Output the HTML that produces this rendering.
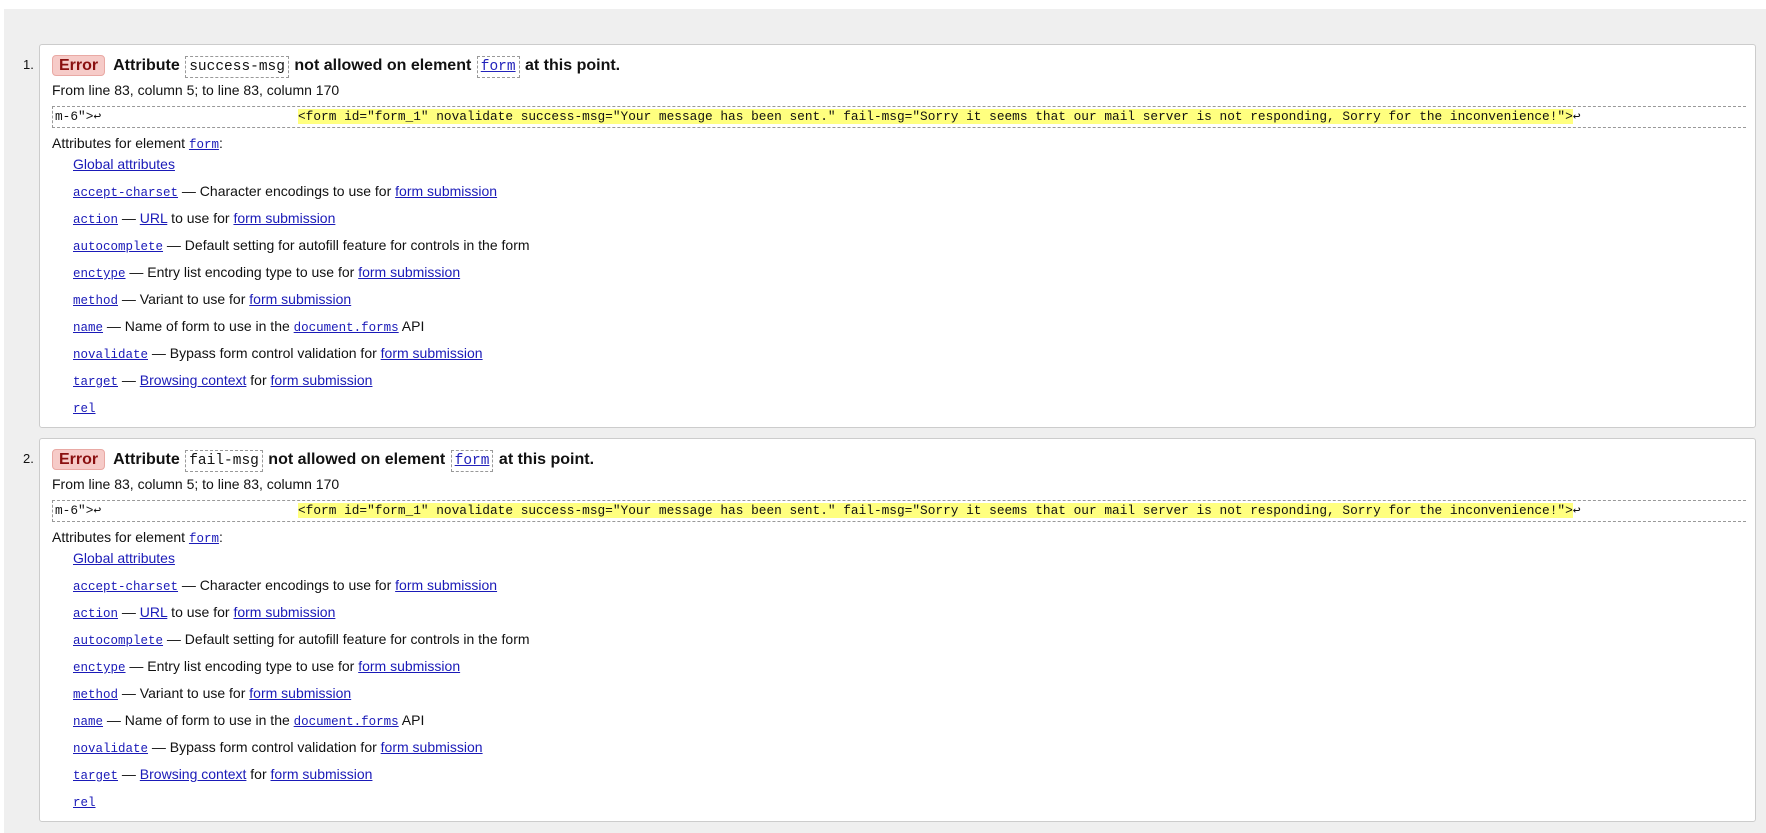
<!DOCTYPE html>
<html><head><meta charset="utf-8"><style>
html,body{margin:0;padding:0;background:#fff;width:1766px;height:833px;overflow:hidden}
.bg{position:absolute;left:4px;top:9px;right:0;bottom:0;background:#efefef}
.card{position:absolute;left:39px;width:1715px;height:382px;background:#fff;border:1px solid #ccc;border-radius:3px;font-family:"Liberation Sans",Arial,sans-serif;font-size:14px;color:#111}
.num{position:absolute;left:-17px;top:12px;font-size:13px}
.h{position:absolute;left:12px;top:10px;font-size:16px;font-weight:bold;white-space:nowrap;line-height:20px}
.badge{display:inline-block;background:#f6cbc8;border:1px solid #e9a9a4;border-radius:4px;padding:0 6px;color:#8a1010;margin-right:8px;line-height:19px}
.hc{font-family:"Liberation Mono",monospace;font-weight:normal;font-size:14.5px;border:1px dashed #999;padding:2px 3px;margin:0 1px}
.hc.l{color:#2222bb;text-decoration:underline}
.from{position:absolute;left:12px;top:36px;line-height:18px}
.code{position:absolute;left:12px;width:1693px;top:61px;height:20px;border-top:1px dashed #999;border-bottom:1px dashed #999;border-left:1px dashed #999;font-family:"Liberation Mono",monospace;font-size:12.8px;line-height:20px;white-space:pre}
.code .a{position:absolute;left:2px}
.code .w{position:absolute;left:245px}
.code .y{background:#ffff7f}
.attr{position:absolute;left:12px;top:89px;line-height:18px}
a,.lk{color:#1a1ab8;text-decoration:underline}
.m{font-family:"Liberation Mono",monospace;font-size:12.5px}
ul{position:absolute;left:33px;top:106px;margin:0;padding:0;list-style:none}
li{line-height:27px;height:27px;white-space:nowrap}
</style></head><body>
<div class="bg"></div>

<div class="card" style="top:44px">
<div class="num">1.</div>
<div class="h"><span class="badge">Error</span>Attribute <span class="hc">success-msg</span> not allowed on element <span class="hc l">form</span> at this point.</div>
<div class="from">From line 83, column 5; to line 83, column 170</div>
<div class="code"><span class="a">m-6"&gt;↩</span><span class="w"><span class="y">&lt;form id="form_1" novalidate success-msg="Your message has been sent." fail-msg="Sorry it seems that our mail server is not responding, Sorry for the inconvenience!"&gt;</span>↩</span></div>
<div class="attr">Attributes for element <span class="lk m">form</span>:</div>
<ul>
<li><span class="lk">Global attributes</span></li>
<li><span class="lk m">accept-charset</span> — Character encodings to use for <span class="lk">form submission</span></li>
<li><span class="lk m">action</span> — <span class="lk">URL</span> to use for <span class="lk">form submission</span></li>
<li><span class="lk m">autocomplete</span> — Default setting for autofill feature for controls in the form</li>
<li><span class="lk m">enctype</span> — Entry list encoding type to use for <span class="lk">form submission</span></li>
<li><span class="lk m">method</span> — Variant to use for <span class="lk">form submission</span></li>
<li><span class="lk m">name</span> — Name of form to use in the <span class="lk m">document.forms</span> API</li>
<li><span class="lk m">novalidate</span> — Bypass form control validation for <span class="lk">form submission</span></li>
<li><span class="lk m">target</span> — <span class="lk">Browsing context</span> for <span class="lk">form submission</span></li>
<li><span class="lk m">rel</span></li>
</ul>
</div>

<div class="card" style="top:438px">
<div class="num">2.</div>
<div class="h"><span class="badge">Error</span>Attribute <span class="hc">fail-msg</span> not allowed on element <span class="hc l">form</span> at this point.</div>
<div class="from">From line 83, column 5; to line 83, column 170</div>
<div class="code"><span class="a">m-6"&gt;↩</span><span class="w"><span class="y">&lt;form id="form_1" novalidate success-msg="Your message has been sent." fail-msg="Sorry it seems that our mail server is not responding, Sorry for the inconvenience!"&gt;</span>↩</span></div>
<div class="attr">Attributes for element <span class="lk m">form</span>:</div>
<ul>
<li><span class="lk">Global attributes</span></li>
<li><span class="lk m">accept-charset</span> — Character encodings to use for <span class="lk">form submission</span></li>
<li><span class="lk m">action</span> — <span class="lk">URL</span> to use for <span class="lk">form submission</span></li>
<li><span class="lk m">autocomplete</span> — Default setting for autofill feature for controls in the form</li>
<li><span class="lk m">enctype</span> — Entry list encoding type to use for <span class="lk">form submission</span></li>
<li><span class="lk m">method</span> — Variant to use for <span class="lk">form submission</span></li>
<li><span class="lk m">name</span> — Name of form to use in the <span class="lk m">document.forms</span> API</li>
<li><span class="lk m">novalidate</span> — Bypass form control validation for <span class="lk">form submission</span></li>
<li><span class="lk m">target</span> — <span class="lk">Browsing context</span> for <span class="lk">form submission</span></li>
<li><span class="lk m">rel</span></li>
</ul>
</div>
</body></html>
